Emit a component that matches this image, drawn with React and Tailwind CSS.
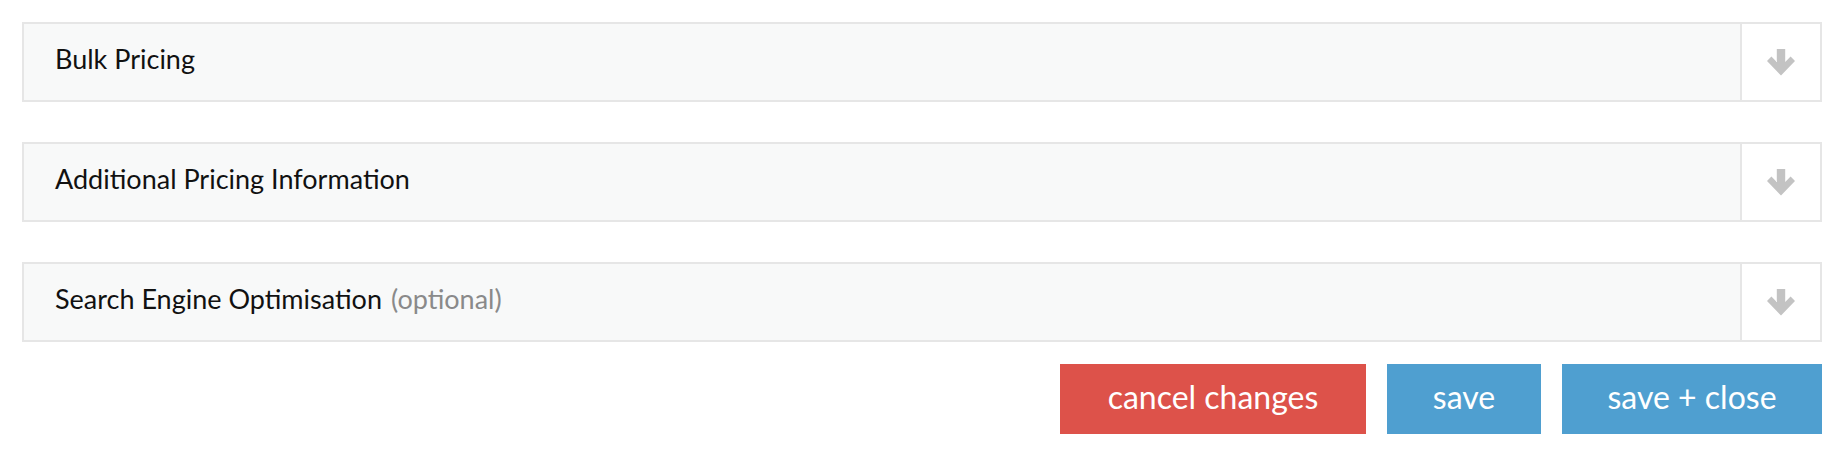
import React from "react";

const sections = [
  { title: "Bulk Pricing" },
  { title: "Additional Pricing Information" },
  { title: "Search Engine Optimisation", note: "(optional)" },
];

function ArrowDown() {
  return (
    <svg width="28" height="27" viewBox="0 0 28 27" className="block">
      <path
        d="M9.8 0 H18.2 V13 L23.6 7.6 L28 12 L14 26.5 L0 12 L4.4 7.6 L9.8 13 Z"
        fill="#c3c3c3"
      />
    </svg>
  );
}

function Section({ title, note }) {
  return (
    <div className="flex h-[80px] border-2 border-[#e6e6e6] bg-[#f8f9f9]">
      <div className="flex flex-1 items-center pb-[5px] pl-[31px] text-[27px] text-[#111]">
        <span>{title}</span>
        {note && <span className="ml-[9px] text-[#8a8a8a]">{note}</span>}
      </div>
      <button className="flex w-[80px] items-center justify-center border-l-2 border-[#e6e6e6] bg-white">
        <ArrowDown />
      </button>
    </div>
  );
}

export default function App() {
  return (
    <div
      className="bg-white pl-[22px] pr-[24px] pt-[22px] h-[460px]"
      style={{ fontFamily: "Lato, 'Open Sans', sans-serif" }}
    >
      <div className="flex flex-col gap-[40px]">
        {sections.map((s) => (
          <Section key={s.title} title={s.title} note={s.note} />
        ))}
      </div>

      <div className="mt-[22px] flex justify-end gap-[21px]">
        <button className="h-[70px] w-[306px] bg-[#dd524a] pb-[5px] text-[32px] text-white">cancel changes</button>
        <button className="h-[70px] w-[154px] bg-[#4f9fd0] pb-[5px] text-[32px] text-white">save</button>
        <button className="h-[70px] w-[260px] bg-[#4f9fd0] pb-[5px] text-[32px] text-white">save + close</button>
      </div>
    </div>
  );
}
